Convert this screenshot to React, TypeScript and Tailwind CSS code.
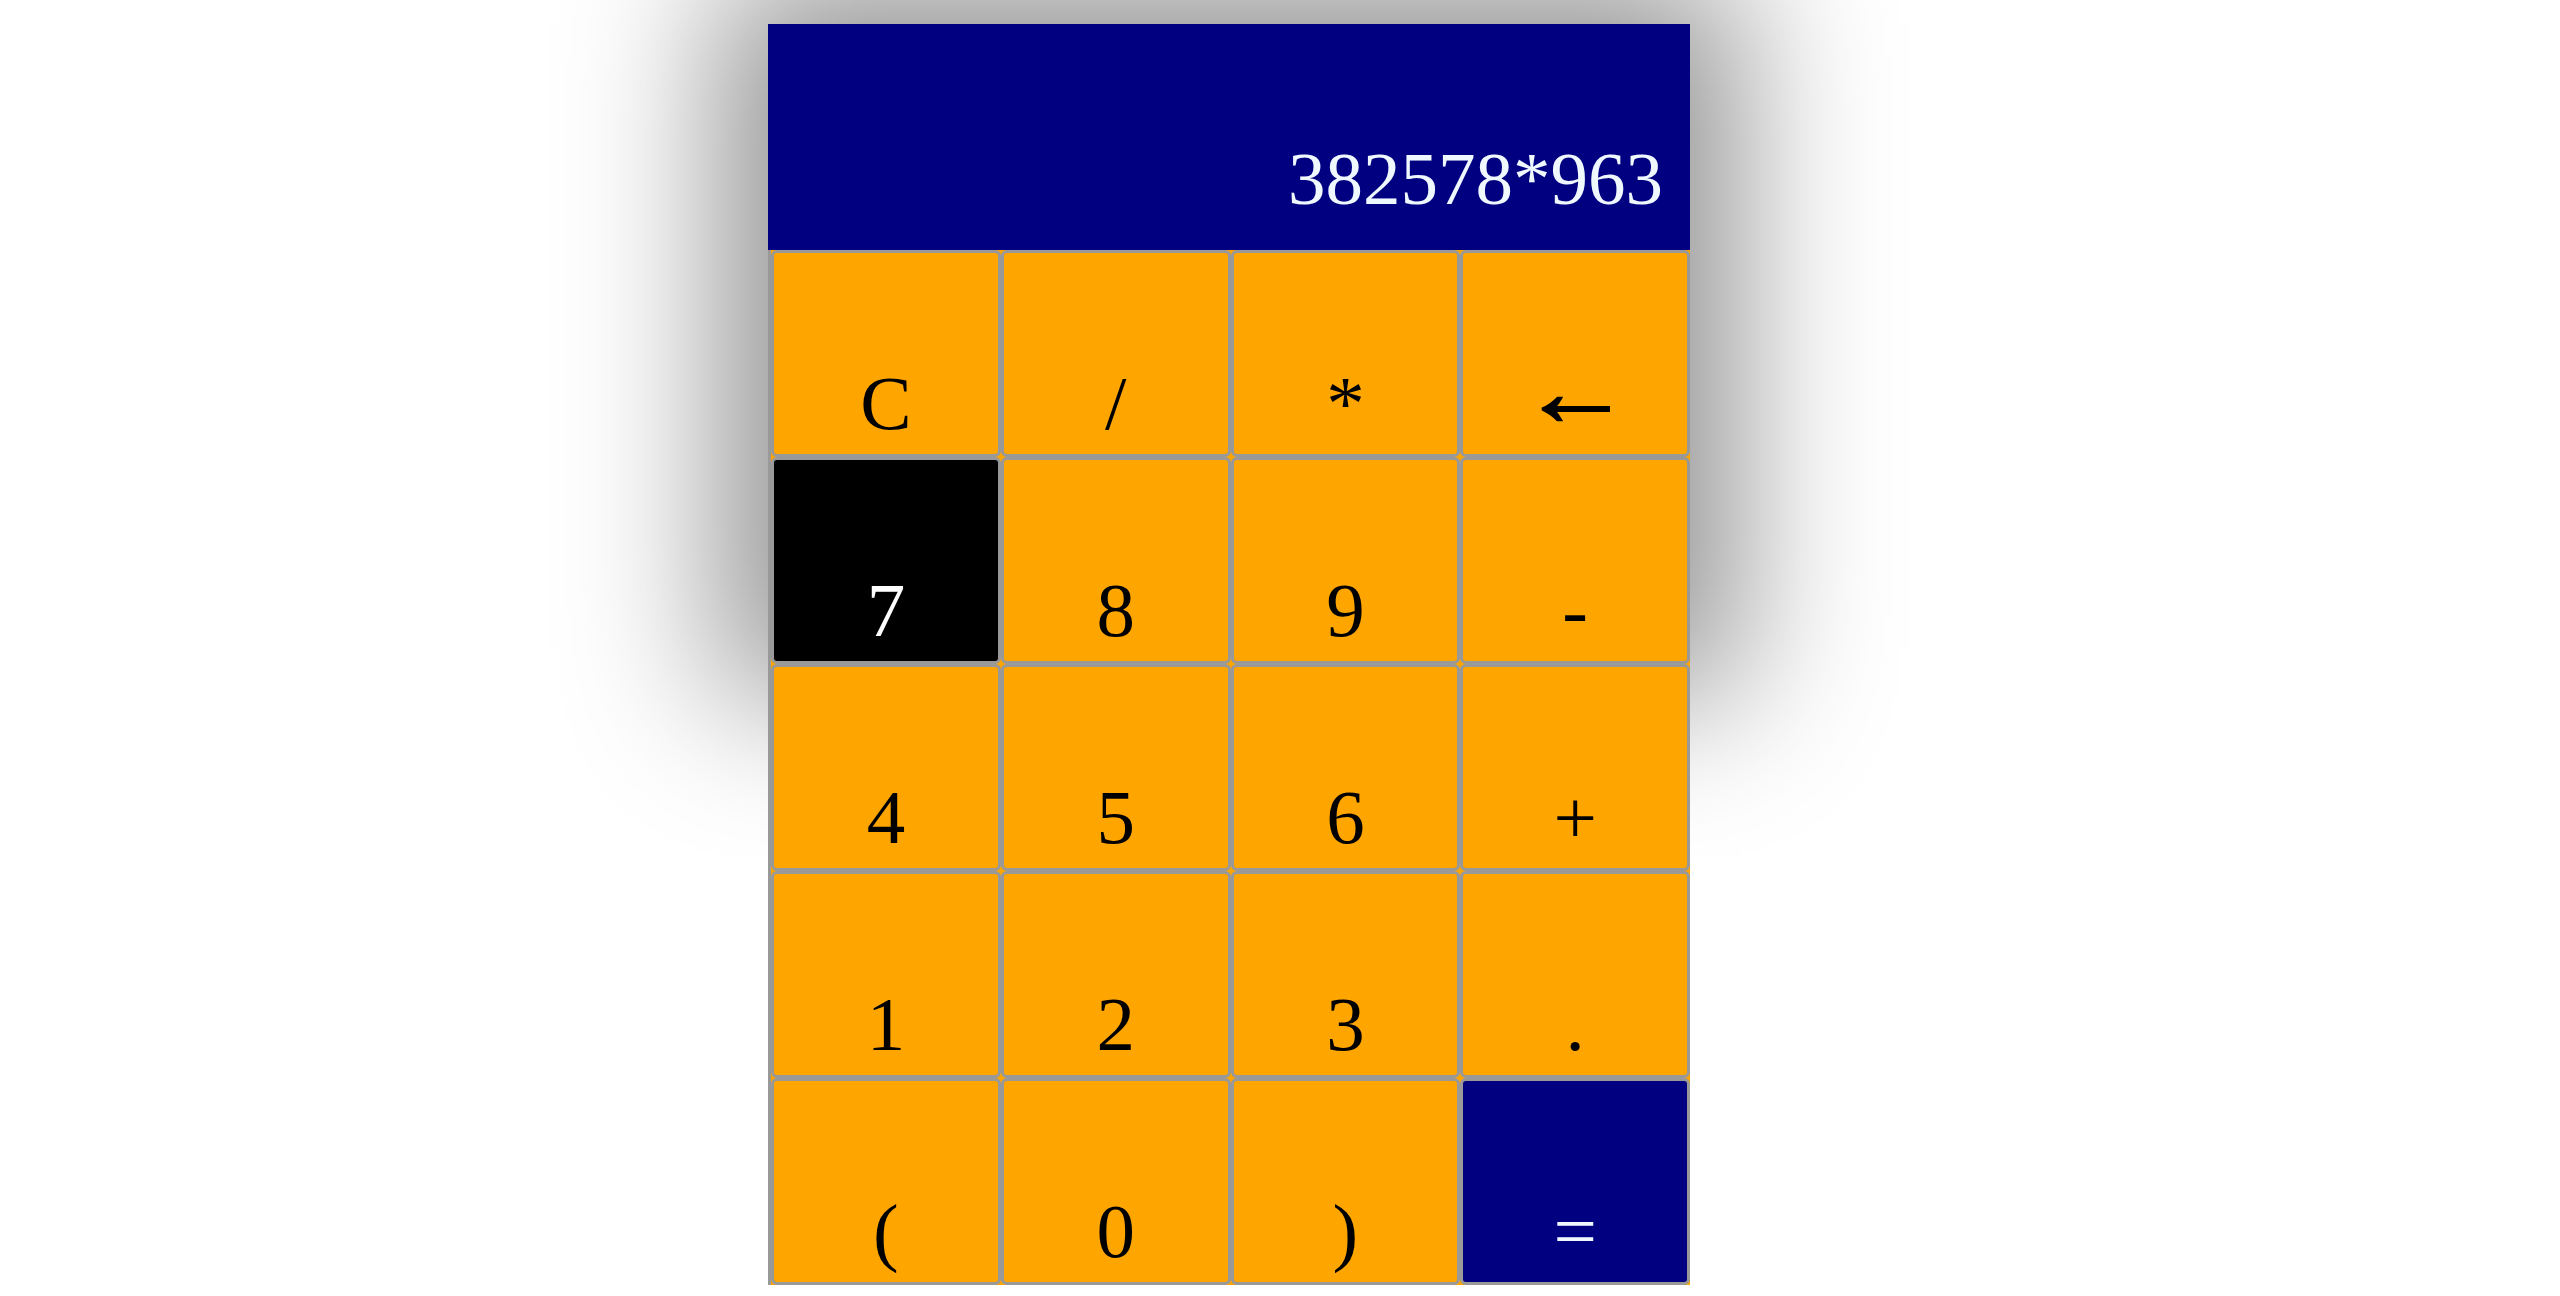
const KEYS: { label: string; tone?: "dark" | "navy" }[] = [
  { label: "C" },
  { label: "/" },
  { label: "*" },
  { label: "←" },
  { label: "7", tone: "dark" },
  { label: "8" },
  { label: "9" },
  { label: "-" },
  { label: "4" },
  { label: "5" },
  { label: "6" },
  { label: "+" },
  { label: "1" },
  { label: "2" },
  { label: "3" },
  { label: "." },
  { label: "(" },
  { label: "0" },
  { label: ")" },
  { label: "=", tone: "navy" },
];

function Key({ label, tone }: { label: string; tone?: "dark" | "navy" }) {
  const bg =
    tone === "dark"
      ? "bg-black text-white"
      : tone === "navy"
        ? "bg-[#000080] text-[#f0f8ff]"
        : "bg-[#ffa500] text-black";
  const isArrow = label === "←";
  return (
    <button
      className={`${bg} h-[207px] border-[3px] border-[#999999] rounded-[6px] flex items-end justify-center text-[77px] leading-none ${isArrow ? "pb-[22px]" : "pb-[12px]"}`}
    >
      {isArrow ? (
        <span className="inline-block scale-x-[1.45] scale-y-[1.25] [-webkit-text-stroke:1.5px_black]">{label}</span>
      ) : (
        <span>{label}</span>
      )}
    </button>
  );
}

export default function App() {
  return (
    <div className="min-h-[1296px] bg-white pt-[24px] font-['Liberation_Serif','Times_New_Roman',serif]">
      <div className="ml-[768px] w-[922px] h-[624px] shadow-[0_0_140px_50px_rgba(0,0,0,0.42)]">
        <div className="h-[226px] bg-[#000080] flex items-end justify-end pr-[27px] pb-[34px] text-[75px] leading-none text-[#f0f8ff]">
          382578*963
        </div>
        <div className="grid grid-cols-4 bg-[#ffa500] border-l-[3px] border-[#999999]">
          {KEYS.map((k) => (
            <Key key={k.label} label={k.label} tone={k.tone} />
          ))}
        </div>
      </div>
    </div>
  );
}
